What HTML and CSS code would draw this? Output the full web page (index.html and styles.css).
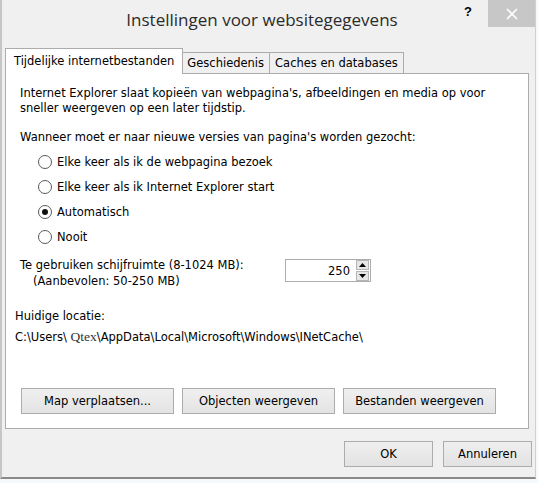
FILE: index.html
```html
<!DOCTYPE html>
<html lang="nl">
<head>
    <meta charset="UTF-8">
    <meta name="viewport" content="width=device-width, initial-scale=1.0">
    <title>Instellingen voor websitegegevens</title>
    <link rel="stylesheet" href="styles.css">
</head>
<body>
    <div class="window">
        <div class="titlebar">
            <h1 class="title">Instellingen voor websitegegevens</h1>
            <span class="help">?</span>
            <span class="close">
                <svg width="12" height="12" viewBox="0 0 12 12"><path d="M1 1 L11 11 M11 1 L1 11" stroke="#fff" stroke-width="1.6"/></svg>
            </span>
        </div>

        <div class="tabs">
            <div class="tab active">Tijdelijke internetbestanden</div>
            <div class="tab">Geschiedenis</div>
            <div class="tab">Caches en databases</div>
        </div>

        <div class="panel">
            <p class="intro">Internet Explorer slaat kopieën van webpagina's, afbeeldingen en media op voor sneller weergeven op een later tijdstip.</p>

            <p class="question">Wanneer moet er naar nieuwe versies van pagina's worden gezocht:</p>
            <div class="radios">
                <label class="radio"><span class="dot"></span>Elke keer als ik de webpagina bezoek</label>
                <label class="radio"><span class="dot"></span>Elke keer als ik Internet Explorer start</label>
                <label class="radio"><span class="dot checked"></span>Automatisch</label>
                <label class="radio"><span class="dot"></span>Nooit</label>
            </div>

            <div class="space-row">
                <div class="space-label">
                    <div>Te gebruiken schijfruimte (8-1024 MB):</div>
                    <div class="hint">(Aanbevolen: 50-250 MB)</div>
                </div>
                <div class="spinner">
                    <span class="spin-value">250</span>
                    <span class="spin-buttons">
                        <span class="spin-btn"><svg width="7" height="4" viewBox="0 0 7 4"><path d="M0 4 L3.5 0 L7 4 Z" fill="#000"/></svg></span>
                        <span class="spin-btn"><svg width="7" height="4" viewBox="0 0 7 4"><path d="M0 0 L7 0 L3.5 4 Z" fill="#000"/></svg></span>
                    </span>
                </div>
            </div>

            <p class="location-label">Huidige locatie:</p>
            <p class="location">C:\Users\ <span class="user">Qtex</span>\AppData\Local\Microsoft\Windows\INetCache\</p>

            <div class="panel-buttons">
                <button type="button" class="btn wide">Map verplaatsen...</button>
                <button type="button" class="btn wide">Objecten weergeven</button>
                <button type="button" class="btn wide">Bestanden weergeven</button>
            </div>
        </div>

        <div class="footer">
            <button type="button" class="btn">OK</button>
            <button type="button" class="btn">Annuleren</button>
        </div>
    </div>
</body>
</html>
```

FILE: styles.css
```css
body {
    margin: 0;
    padding: 0;
    background-color: #f6f9fc;
    font-family: "DejaVu Sans", Tahoma, sans-serif;
    font-size: 11.5px;
    color: #000;
}

.window {
    width: 533px;
    height: 477px;
    background-color: #f0f0f0;
    border-left: 2px solid #c6c6c6;
    border-bottom: 2px solid #8a8a8a;
    border-right: 1px solid #d0d0d0;
    display: flex;
    flex-direction: column;
}

.titlebar {
    height: 40px;
    display: flex;
    align-items: flex-start;
}

.title {
    margin: 0;
    flex: 1;
    padding-left: 58px;
    text-align: center;
    font-family: "Open Sans", sans-serif;
    font-weight: 400;
    font-size: 17px;
    line-height: 40px;
    color: #2b2b2b;
}

.help {
    font-family: "Liberation Sans", Arial, sans-serif;
    font-weight: bold;
    font-size: 13px;
    margin-top: 4px;
    margin-right: 16px;
}

.close {
    width: 47px;
    height: 27px;
    background-color: #c7c7c7;
    display: flex;
    align-items: center;
    justify-content: center;
}

.tabs {
    display: flex;
    align-items: flex-end;
    margin-top: 8px;
    padding-left: 3px;
    position: relative;
    z-index: 1;
}

.tab {
    height: 20px;
    line-height: 20px;
    padding: 0 5px;
    border: 1px solid #acacac;
    border-bottom: none;
    background-color: #f0f0f0;
    margin-left: -1px;
}

.tab.active {
    height: 25px;
    line-height: 24px;
    padding: 0 8px;
    background-color: #fff;
    margin-left: 0;
    margin-bottom: -1px;
    margin-right: -1px;
    position: relative;
    z-index: 2;
}

.panel {
    margin-left: 3px;
    width: 524px;
    background-color: #fff;
    border: 1px solid #acacac;
    padding: 12px 0 14px 0;
    box-sizing: border-box;
    height: 356px;
    display: flex;
    flex-direction: column;
}

.panel p {
    margin: 0;
    line-height: 15px;
}

.intro {
    padding: 0 14px;
}

.question {
    padding: 0 14px;
    margin-top: 14px !important;
}

.radios {
    margin-top: 4px;
    padding-left: 32px;
}

.radio {
    display: flex;
    align-items: center;
    height: 25px;
}

.dot {
    width: 12px;
    height: 12px;
    border: 1px solid #5a5a5a;
    border-radius: 50%;
    background: #fff;
    margin-right: 5px;
    display: flex;
    align-items: center;
    justify-content: center;
}

.dot.checked::after {
    content: "";
    width: 6px;
    height: 6px;
    border-radius: 50%;
    background: #111;
}

.space-row {
    display: flex;
    align-items: flex-start;
    padding-left: 14px;
    margin-top: 9px;
}

.space-label {
    width: 265px;
    line-height: 15px;
}

.hint {
    padding-left: 13px;
    margin-top: 1px;
}

.spinner {
    width: 84px;
    height: 21px;
    border: 1px solid #abadb3;
    display: flex;
    align-items: center;
    justify-content: flex-end;
    margin-top: 1px;
}

.spin-value {
    margin-right: 6px;
}

.spin-buttons {
    display: flex;
    flex-direction: column;
    gap: 1px;
    margin-right: 1px;
}

.spin-btn {
    width: 13px;
    height: 10px;
    background-color: #e6e6e6;
    border: 1px solid #b5b5b5;
    display: flex;
    align-items: center;
    justify-content: center;
    box-sizing: border-box;
}

.location-label {
    padding-left: 9px;
    margin-top: 20px !important;
}

.location {
    padding-left: 9px;
    margin-top: 5px !important;
}

.user {
    font-family: "Liberation Serif", serif;
    font-size: 13.5px;
    color: #333;
}

.panel-buttons {
    margin-top: auto;
    display: flex;
    gap: 8px;
    padding-left: 15px;
}

.btn {
    font-family: "DejaVu Sans", Tahoma, sans-serif;
    font-size: 11.5px;
    color: #000;
    height: 26px;
    width: 89px;
    background: linear-gradient(#efefef, #e3e3e3);
    border: 1px solid #acacac;
    padding: 0;
}

.btn.wide {
    width: 153px;
}

.footer {
    display: flex;
    justify-content: flex-end;
    gap: 10px;
    padding-right: 3px;
    margin-top: 12px;
}
```
